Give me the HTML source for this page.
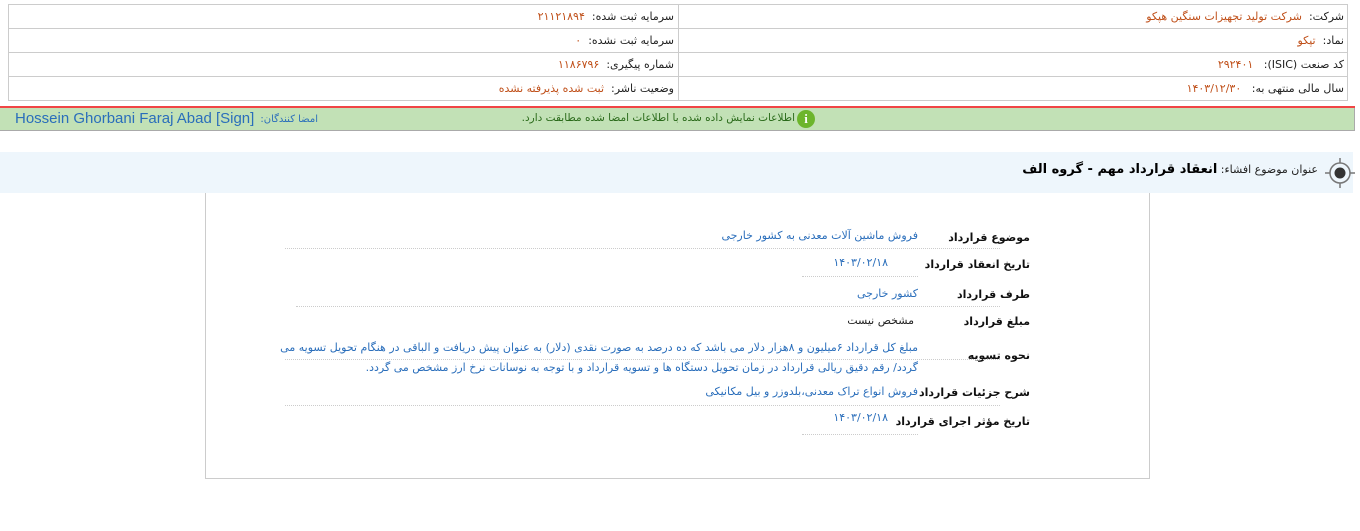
<!DOCTYPE html>
<html><head><meta charset="utf-8"><style>
*{margin:0;padding:0;box-sizing:border-box}
body{width:1360px;height:531px;background:#fff;position:relative;overflow:hidden;font-family:"DejaVu Sans","Liberation Sans",sans-serif;font-size:11px;color:#222}
.a{position:absolute;white-space:nowrap;direction:rtl}
.cell{position:absolute;border:1px solid #ccc;height:25px}
.o{color:#c0501a}
.b{color:#2a6ebb}
.lb{font-weight:bold;color:#111}
.dot{position:absolute;border-top:1px dotted #ccc;height:0}
</style></head><body>
<div class="cell" style="left:8px;top:4px;width:671px;"></div>
<div class="cell" style="left:678px;top:4px;width:670px;"></div>
<div class="cell" style="left:8px;top:28px;width:671px;"></div>
<div class="cell" style="left:678px;top:28px;width:670px;"></div>
<div class="cell" style="left:8px;top:52px;width:671px;"></div>
<div class="cell" style="left:678px;top:52px;width:670px;"></div>
<div class="cell" style="left:8px;top:76px;width:671px;"></div>
<div class="cell" style="left:678px;top:76px;width:670px;"></div>

<div class="a" style="right:16px;top:10px">شرکت:&nbsp; <span class="o">شرکت تولید تجهیزات سنگین هپکو</span></div>
<div class="a" style="right:16px;top:34px">نماد:&nbsp; <span class="o">تپکو</span></div>
<div class="a" style="right:16px;top:58px">کد صنعت (ISIC):&nbsp;&nbsp; <span class="o">۲۹۲۴۰۱</span></div>
<div class="a" style="right:16px;top:82px">سال مالی منتهی به:&nbsp;&nbsp; <span class="o">۱۴۰۳/۱۲/۳۰</span></div>
<div class="a" style="right:686px;top:10px">سرمایه ثبت شده:&nbsp; <span class="o">۲۱۱۲۱۸۹۴</span></div>
<div class="a" style="right:686px;top:34px">سرمایه ثبت نشده:&nbsp; <span class="o">۰</span></div>
<div class="a" style="right:686px;top:58px">شماره پیگیری:&nbsp; <span class="o">۱۱۸۶۷۹۶</span></div>
<div class="a" style="right:686px;top:82px">وضعیت ناشر:&nbsp; <span class="o">ثبت شده پذیرفته نشده</span></div>

<div style="position:absolute;left:0;top:106px;width:1355px;height:2px;background:#f04545"></div>
<div style="position:absolute;left:0;top:108px;width:1355px;height:23px;background:#c2e1b6;border-bottom:1px solid #aaa;border-right:1px solid #aaa"></div>
<div class="a" style="right:565px;top:112px;color:#2a6a1a;font-size:10.5px">اطلاعات نمایش داده شده با اطلاعات امضا شده مطابقت دارد.</div>
<div style="position:absolute;left:797px;top:110px;width:18px;height:18px;border-radius:50%;background:#6cb52c;color:#fff;font-weight:bold;font-size:13px;text-align:center;line-height:18px;font-family:'Liberation Serif',serif">i</div>
<div style="position:absolute;left:15px;top:110px;white-space:nowrap;font-family:'Liberation Sans',sans-serif;font-size:15px;color:#2a6ebb">Hossein Ghorbani Faraj Abad [Sign]</div>
<div class="a" style="right:1042px;top:114px;font-size:10px;color:#2a6ebb">امضا کنندگان:</div>

<div style="position:absolute;left:0;top:152px;width:1353px;height:41px;background:#eef6fc"></div>
<svg style="position:absolute;left:1323px;top:156px" width="34" height="34" viewBox="0 0 34 34"><circle cx="17" cy="17" r="10" fill="none" stroke="#777" stroke-width="1.5"/><circle cx="17" cy="17" r="5.5" fill="#333"/><path d="M17 2v5M17 27v5M2 17h5M27 17h5" stroke="#777" stroke-width="1.5"/></svg>
<div class="a" style="right:42px;top:162px;font-size:11px">عنوان موضوع افشاء: <b style="font-size:13px;color:#000">انعقاد قرارداد مهم - گروه الف</b></div>

<div style="position:absolute;left:205px;top:193px;width:945px;height:286px;border:1px solid #ccc;border-top:none"></div>

<div class="a lb" style="right:330px;top:231px">موضوع قرارداد</div>
<div class="a b" style="right:442px;top:229px">فروش ماشین آلات معدنی به کشور خارجی</div>
<div class="dot" style="left:285px;top:248px;width:715px"></div>

<div class="a lb" style="right:330px;top:258px">تاریخ انعقاد قرارداد</div>
<div class="a b" style="right:472px;top:256px">۱۴۰۳/۰۲/۱۸</div>
<div class="dot" style="left:802px;top:276px;width:116px"></div>

<div class="a lb" style="right:330px;top:288px">طرف قرارداد</div>
<div class="a b" style="right:442px;top:287px">کشور خارجی</div>
<div class="dot" style="left:296px;top:306px;width:704px"></div>

<div class="a lb" style="right:330px;top:315px">مبلغ قرارداد</div>
<div class="a" style="right:446px;top:314px">مشخص نیست</div>

<div class="a lb" style="right:330px;top:349px">نحوه تسویه</div>
<div class="a b" style="right:442px;top:338px;width:640px;white-space:normal;direction:rtl;line-height:20px;text-align:right">مبلغ کل قرارداد ۶میلیون و ۸هزار دلار می باشد که ده درصد به صورت نقدی (دلار) به عنوان پیش دریافت و الباقی در هنگام تحویل تسویه می گردد/ رقم دقیق ریالی قرارداد در زمان تحویل دستگاه ها و تسویه قرارداد و با توجه به نوسانات نرخ ارز مشخص می گردد.</div>
<div class="dot" style="left:285px;top:359px;width:715px"></div>

<div class="a lb" style="right:330px;top:386px">شرح جزئیات قرارداد</div>
<div class="a b" style="right:442px;top:385px">فروش انواع تراک معدنی،بلدوزر و بیل مکانیکی</div>
<div class="dot" style="left:285px;top:405px;width:715px"></div>

<div class="a lb" style="right:330px;top:415px">تاریخ مؤثر اجرای قرارداد</div>
<div class="a b" style="right:472px;top:411px">۱۴۰۳/۰۲/۱۸</div>
<div class="dot" style="left:802px;top:434px;width:116px"></div>
</body></html>
